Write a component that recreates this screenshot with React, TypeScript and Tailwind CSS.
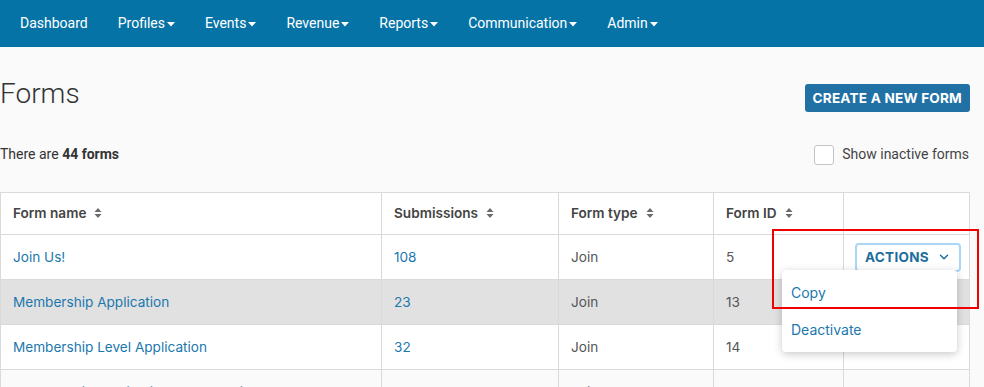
import { ChevronDown } from "lucide-react";

const navItems = [
  { label: "Dashboard", caret: false },
  { label: "Profiles", caret: true },
  { label: "Events", caret: true },
  { label: "Revenue", caret: true },
  { label: "Reports", caret: true },
  { label: "Communication", caret: true },
  { label: "Admin", caret: true },
];

const rows = [
  { name: "Join Us!", subs: "108", type: "Join", id: "5", bg: "bg-white" },
  { name: "Membership Application", subs: "23", type: "Join", id: "13", bg: "bg-[#e1e1e1]" },
  { name: "Membership Level Application", subs: "32", type: "Join", id: "14", bg: "bg-white" },
  { name: "Membership Application Dues/credit", subs: "19", type: "Join", id: "15", bg: "bg-[#fafafa]" },
];

const SortIcon = () => (
  <svg width="8" height="12" viewBox="0 0 8 12" className="ml-2 inline-block align-[-1px]">
    <path d="M4 1 L7.5 5 H0.5 Z" fill="#6b6b6b" />
    <path d="M4 11 L7.5 7 H0.5 Z" fill="#6b6b6b" />
  </svg>
);

const Caret = () => (
  <svg width="8" height="5" viewBox="0 0 8 5" className="ml-[2px] mt-[2px]">
    <path d="M0 0 H8 L4 4.5 Z" fill="#ffffff" />
  </svg>
);

const ActionsButton = ({ focused }: { focused: boolean }) => (
  <button
    className={`flex h-[29px] items-center gap-[8px] rounded-[4px] border-2 px-[8px] text-[13.5px] font-bold tracking-[0.3px] text-[#1c6c9c] ${
      focused ? "border-[#a9d5f7]" : "border-transparent"
    }`}
  >
    ACTIONS
    <ChevronDown size={14} strokeWidth={2.5} />
  </button>
);

const App = () => {
  return (
    <div className="h-[387px] w-[984px] overflow-hidden bg-[#fafafa] font-['Inter',sans-serif]">
      <nav className="flex h-[47px] items-center gap-[30px] bg-[#0673a7] pl-[20px] font-['Roboto',sans-serif] text-[14px] text-white">
        {navItems.map((item) => (
          <div key={item.label} className="flex items-center">
            <span>{item.label}</span>
            {item.caret && <Caret />}
          </div>
        ))}
      </nav>

      <div className="flex items-start justify-between pr-[14px] pt-[30px]">
        <h1 className="font-['Roboto',sans-serif] text-[28px] font-light leading-[34px] text-[#333]">
          Forms
        </h1>
        <button className="mt-[7px] h-[28px] rounded-[3px] bg-[#2171a5] px-[8px] text-[13.6px] font-bold tracking-[0.2px] text-white">
          CREATE A NEW FORM
        </button>
      </div>

      <div className="mt-[32px] flex items-center justify-between pr-[15px] font-['Roboto',sans-serif] text-[14px] text-[#333]">
        <p>
          There are <span className="font-bold">44 forms</span>
        </p>
        <label className="flex items-center gap-[8px] text-[14px] text-[#444]">
          <span className="h-[20px] w-[20px] rounded-[3px] border-[1.5px] border-[#c4c4c4] bg-white" />
          Show inactive forms
        </label>
      </div>

      <div className="relative mt-[27px] w-[970px]">
        <table className="w-full border-collapse text-[13.6px]">
          <thead>
            <tr className="h-[42px] bg-white text-left font-semibold text-[#444]">
              <th className="w-[381px] border border-[#dadada] pl-[12px] font-semibold">
                Form name
                <SortIcon />
              </th>
              <th className="w-[177px] border border-[#dadada] pl-[12px] font-semibold">
                Submissions
                <SortIcon />
              </th>
              <th className="w-[155px] border border-[#dadada] pl-[12px] font-semibold">
                Form type
                <SortIcon />
              </th>
              <th className="w-[130px] border border-[#dadada] pl-[12px] font-semibold">
                Form ID
                <SortIcon />
              </th>
              <th className="border border-[#dadada]" />
            </tr>
          </thead>
          <tbody>
            {rows.map((r, i) => (
              <tr key={r.id} className={`h-[45px] ${r.bg}`}>
                <td className="border border-[#dadada] pl-[12px] text-[#1b78ad]">{r.name}</td>
                <td className="border border-[#dadada] pl-[12px] text-[#1b78ad]">{r.subs}</td>
                <td className="border border-[#dadada] pl-[12px] text-[#555]">{r.type}</td>
                <td className="border border-[#dadada] pl-[12px] text-[#555]">{r.id}</td>
                <td className="border border-[#dadada] pl-[11px]">
                  <ActionsButton focused={i === 0} />
                </td>
              </tr>
            ))}
          </tbody>
        </table>

        <div className="absolute left-[782px] top-[78px] w-[175px] rounded-[4px] bg-white py-[4px] text-[14px] text-[#1b78ad] shadow-[0_2px_8px_rgba(0,0,0,0.22)]">
          <div className="flex h-[37px] items-center px-[9px]">Copy</div>
          <div className="flex h-[37px] items-center px-[9px]">Deactivate</div>
        </div>

        <div className="absolute left-[772px] top-[37px] h-[80px] w-[207px] border-2 border-[#f00000]" />
      </div>
    </div>
  );
};

export default App;
